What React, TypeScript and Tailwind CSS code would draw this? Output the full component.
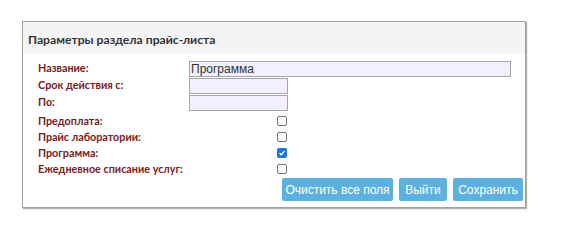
import React from "react";

const labels: { text: string; kind: "input" | "checkbox"; value?: string; wide?: boolean; checked?: boolean }[] = [
  { text: "Название:", kind: "input", value: "Программа", wide: true },
  { text: "Срок действия с:", kind: "input", value: "" },
  { text: "По:", kind: "input", value: "" },
  { text: "Предоплата:", kind: "checkbox" },
  { text: "Прайс лаборатории:", kind: "checkbox" },
  { text: "Программа:", kind: "checkbox", checked: true },
  { text: "Ежедневное списание услуг:", kind: "checkbox" },
];

function Check({ checked }: { checked?: boolean }) {
  return checked ? (
    <span className="flex h-[10px] w-[10px] items-center justify-center rounded-[2px] bg-[#1a73e8]">
      <svg width="8" height="8" viewBox="0 0 8 8">
        <path d="M1.5 4.2 L3.2 5.8 L6.6 2" stroke="white" strokeWidth="1.3" fill="none" />
      </svg>
    </span>
  ) : (
    <span className="block h-[10px] w-[10px] rounded-[2px] border border-[#767676] bg-white" />
  );
}

export default function App() {
  return (
    <div className="min-h-[245px] bg-white pl-[22px] pt-[21px]" style={{ fontFamily: 'Lato, "Noto Sans", sans-serif' }}>
      <div className="h-[187px] w-[504px] border border-[#a0a0a0] shadow-[1px_1px_1px_#b0b0b0]">
        <div className="flex h-[31px] items-center whitespace-nowrap bg-[#f4f4f4] pl-[5px] pt-[5px] text-[12.2px] font-bold text-[#333]">
          Параметры раздела прайс-листа
        </div>
        <div className="pl-[15px] pt-[7px]">
          {labels.map((l, i) => (
            <div key={i} className={`flex items-center ${l.kind === "input" ? "h-[17px]" : "h-[16px]"} ${i === 3 ? "mt-[2px]" : ""}`}>
              <div className="w-[151px] whitespace-nowrap text-[10.8px] font-bold leading-none text-[#7b2020]">{l.text}</div>
              {l.kind === "input" ? (
                <div
                  className={`flex h-[16px] items-center border border-[#a6a6a6] bg-[#f0f0ff] pl-[1px] text-[12px] text-[#333] ${
                    l.wide ? "w-[322px]" : "w-[99px]"
                  }`}
                  style={{ fontFamily: '"Liberation Sans", Arial, sans-serif' }}
                >
                  {l.value}
                </div>
              ) : (
                <div className="ml-[88px]">
                  <Check checked={l.checked} />
                </div>
              )}
            </div>
          ))}
          <div
            className="mt-[1px] flex justify-end gap-[6px] pr-[2px] text-[12px] text-white"
            style={{ fontFamily: '"Liberation Sans", Arial, sans-serif' }}
          >
            <button className="h-[23px] w-[111px] rounded-[2px] bg-[#5bb1e1]">Очистить все поля</button>
            <button className="h-[23px] w-[48px] rounded-[2px] bg-[#5bb1e1]">Выйти</button>
            <button className="h-[23px] w-[70px] rounded-[2px] bg-[#5bb1e1]">Сохранить</button>
          </div>
        </div>
      </div>
    </div>
  );
}
